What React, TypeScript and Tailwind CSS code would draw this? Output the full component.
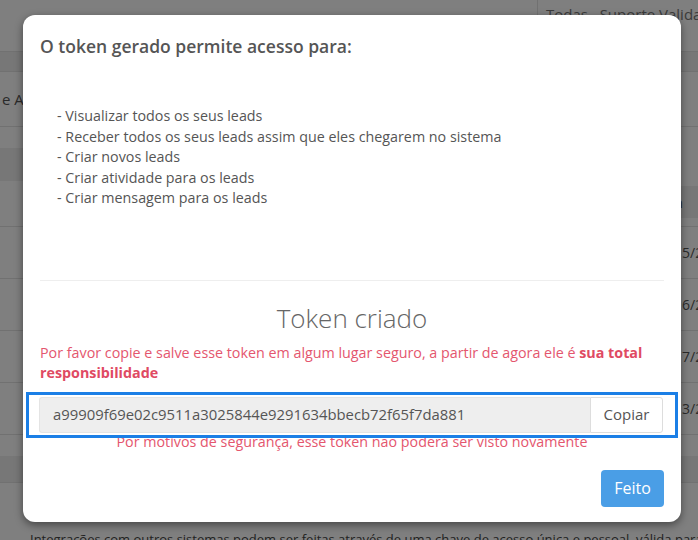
import React from 'react'

const permissions = [
    'Visualizar todos os seus leads',
    'Receber todos os seus leads assim que eles chegarem no sistema',
    'Criar novos leads',
    'Criar atividade para os leads',
    'Criar mensagem para os leads',
]

const TOKEN = 'a99909f69e02c9511a3025844e9291634bbecb72f65f7da881'

const leadRows = ['05/2023', '06/2023', '07/2023', '03/2023']

// the integrations page that sits behind the dialog
function IntegrationsPage() {
    return (
        <div className="flex flex-col text-[14px] text-[#555]">
            <div className="flex h-[52px] border-b border-[#e2e2e2]">
                <div className="flex-1" />
                <div className="w-[161px] border-l border-[#e2e2e2] pl-[8px] pt-[3px] text-[15px] whitespace-nowrap text-[#777]">
                    Todas&nbsp;&nbsp; Suporte Validação
                </div>
            </div>
            <div className="h-[20px] bg-[#eeeeee] border-b border-[#e2e2e2]" />
            <div className="h-[55px] flex items-center border-b border-[#e2e2e2] pl-[2px] text-[15px] whitespace-nowrap">
                e Atividades
            </div>
            <div className="h-[21px]" />
            <div className="flex h-[79px] border-b border-[#e2e2e2]">
                <div className="w-[40px] h-[33px] bg-[#eeeeee]" />
                <div className="flex-1" />
                <div className="w-[25px] flex flex-col justify-end">
                    <div className="h-[32px] mb-[8px] bg-[#eeeeee] flex items-center pl-[1px] font-semibold">n</div>
                </div>
            </div>
            {leadRows.map((date) => (
                <div key={date} className="flex h-[52px] items-center border-b border-[#e2e2e2]">
                    <div className="flex-1" />
                    <div className="w-[17px] pl-[1px] whitespace-nowrap overflow-hidden">{date.slice(1)}</div>
                </div>
            ))}
            <div className="h-[21px]" />
            <div className="h-[27px] bg-[#eeeeee] border-b border-[#e2e2e2]" />
            <div className="h-[47px]" />
            <div className="pl-[30px] text-[13px] whitespace-nowrap text-[#444]">
                Integrações com outros sistemas podem ser feitas através de uma chave de acesso única e pessoal, válida para a sua conta
            </div>
        </div>
    )
}

function TokenDialog() {
    return (
        <div className="absolute left-[23px] top-[15px] w-[658px] rounded-[12px] bg-white px-[17px] pt-[20px] pb-[15px] shadow-[0_3px_9px_rgba(0,0,0,0.45)]">
            <h4 className="text-[17.5px] leading-[22px] font-semibold text-[#555]">
                O token gerado permite acesso para:
            </h4>

            <ul className="mt-[49px] pl-[17px] text-[14.3px] leading-[20.5px] text-[#555]">
                {permissions.map((p) => (
                    <li key={p}>- {p}</li>
                ))}
            </ul>

            <div className="mt-[71px] border-t border-[#eeeeee]" />

            <h2 className="mt-[19px] text-center text-[26px] leading-[36px] font-light text-[#666]">
                Token criado
            </h2>

            <p className="mt-[7px] text-[14.3px] leading-[20px] text-[#e4566e]">
                Por favor copie e salve esse token em algum lugar seguro, a partir de agora ele é{' '}
                <strong className="font-bold text-[#df4a63]">sua total responsibilidade</strong>
            </p>

            <div className="relative z-10 mt-[9px] -ml-[14px] -mr-[14px] border-[3px] border-[#1b7fe6] bg-white pl-[10px] pr-[12px] py-[2px]">
                <div className="flex h-[36px]">
                    <input
                        readOnly
                        value={TOKEN}
                        className="flex-1 min-w-0 bg-[#eeeeee] px-[13px] text-[14.85px] text-[#555] outline-none border border-[#e4e4e4] border-r-0 rounded-l-[3px]"
                    />
                    <button className="w-[73px] border border-[#dddddd] rounded-r-[3px] bg-white text-[15px] text-[#555]">
                        Copiar
                    </button>
                </div>
            </div>

            <p className="-mt-[6px] text-center text-[14.3px] leading-[20px] text-[#e4566e]">
                Por motivos de segurança, esse token não poderá ser visto novamente
            </p>

            <div className="mt-[18px] flex justify-end">
                <button className="h-[37px] w-[63px] rounded-[4px] bg-[#4a9ee6] text-[16px] text-white">
                    Feito
                </button>
            </div>
        </div>
    )
}

export default function App() {
    return (
        <div className="relative h-[540px] w-[698px] overflow-hidden bg-white font-['Open_Sans',sans-serif]">
            <IntegrationsPage />
            <div className="absolute inset-0 bg-black/50" />
            <TokenDialog />
        </div>
    )
}
